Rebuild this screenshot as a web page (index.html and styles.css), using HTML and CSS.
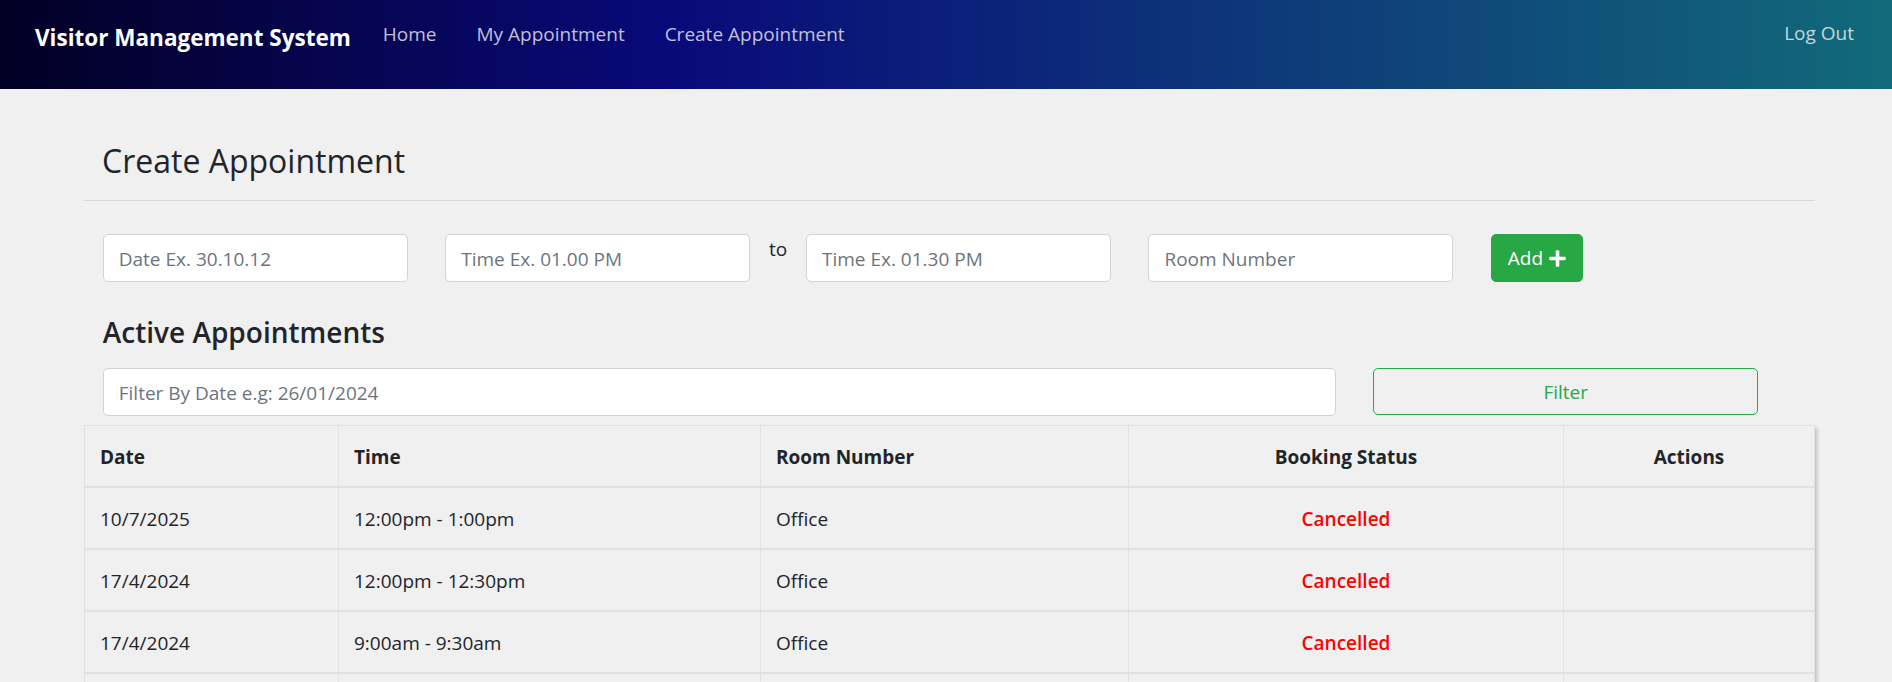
FILE: index.html
```html
<!DOCTYPE html>
<html lang="en">
<head>
<meta charset="utf-8">
<title>Visitor Management System</title>
<link rel="stylesheet" href="styles.css">
</head>
<body>
<nav class="navbar">
  <a class="brand" href="#">Visitor Management System</a>
  <ul class="nav-links">
    <li><a class="nav-link" href="#">Home</a></li>
    <li><a class="nav-link" href="#">My Appointment</a></li>
    <li><a class="nav-link" href="#">Create Appointment</a></li>
  </ul>
  <a class="nav-link logout" href="#">Log Out</a>
</nav>

<main class="page">
  <h3 class="page-title">Create Appointment</h3>
  <hr class="divider">

  <form class="create-row">
    <div class="field-col"><input class="input" type="text" placeholder="Date Ex. 30.10.12"></div>
    <div class="field-col"><input class="input" type="text" placeholder="Time Ex. 01.00 PM"></div>
    <span class="to-label">to</span>
    <div class="field-col"><input class="input" type="text" placeholder="Time Ex. 01.30 PM"></div>
    <div class="field-col"><input class="input" type="text" placeholder="Room Number"></div>
    <div class="btn-col">
      <button class="btn-add" type="button">Add
        <svg class="plus-icon" viewBox="0 0 448 512" aria-hidden="true"><path fill="#fff" d="M416 208H272V64c0-17.670-14.330-32-32-32h-32c-17.670 0-32 14.330-32 32v144H32c-17.670 0-32 14.330-32 32v32c0 17.670 14.330 32 32 32h144v144c0 17.670 14.330 32 32 32h32c17.670 0 32-14.330 32-32V304h144c17.670 0 32-14.330 32-32v-32c0-17.670-14.330-32-32-32z"/></svg>
      </button>
    </div>
  </form>

  <h4 class="section-title">Active Appointments</h4>
  <div class="filter-row">
    <div class="filter-col"><input class="input" type="text" placeholder="Filter By Date e.g: 26/01/2024"></div>
    <div class="filter-btn-col"><button class="btn-filter" type="button">Filter</button></div>
  </div>

  <table class="appt-table">
    <thead>
      <tr>
        <th class="col-date">Date</th>
        <th class="col-time">Time</th>
        <th class="col-room">Room Number</th>
        <th class="col-status center">Booking Status</th>
        <th class="col-actions center">Actions</th>
      </tr>
    </thead>
    <tbody>
      <tr>
        <td>10/7/2025</td>
        <td>12:00pm - 1:00pm</td>
        <td>Office</td>
        <td class="center status-cancelled">Cancelled</td>
        <td></td>
      </tr>
      <tr>
        <td>17/4/2024</td>
        <td>12:00pm - 12:30pm</td>
        <td>Office</td>
        <td class="center status-cancelled">Cancelled</td>
        <td></td>
      </tr>
      <tr>
        <td>17/4/2024</td>
        <td>9:00am - 9:30am</td>
        <td>Office</td>
        <td class="center status-cancelled">Cancelled</td>
        <td></td>
      </tr>
      <tr>
        <td>16/4/2024</td>
        <td>2:00pm - 2:30pm</td>
        <td>Office</td>
        <td class="center status-cancelled">Cancelled</td>
        <td></td>
      </tr>
    </tbody>
  </table>
</main>
</body>
</html>
```

FILE: styles.css
```css
* {
  box-sizing: border-box;
}

html,
body {
  margin: 0;
  padding: 0;
}

body {
  font-family: "Open Sans", "Noto Sans", sans-serif;
  font-size: 19px;
  line-height: 30px;
  color: #212529;
  background: #f0f0f0;
  overflow: hidden;
}

/* ---------- Navbar ---------- */
.navbar {
  height: 89px;
  display: flex;
  align-items: flex-start;
  padding: 19px 38px 0 35px;
  background: linear-gradient(90deg, #020024 0%, #090979 35%, #126a7a 100%);
}

.brand {
  font-size: 22.5px;
  font-weight: 700;
  line-height: 30px;
  color: #ffffff;
  text-decoration: none;
  white-space: nowrap;
  margin-top: 4px;
  margin-right: 32px;
}

.nav-links {
  display: flex;
  gap: 40px;
  list-style: none;
  margin: 0;
  padding: 0;
}

.nav-link {
  font-size: 19px;
  line-height: 28px;
  color: rgba(255, 255, 255, 0.75);
  text-decoration: none;
  white-space: nowrap;
}

.logout {
  margin-left: auto;
}

/* ---------- Page ---------- */
.page {
  padding: 0 77px 0 84px;
}

.page-title {
  margin: 53px 0 0;
  padding-left: 18px;
  font-size: 32px;
  font-weight: 400;
  line-height: 38px;
}

.divider {
  margin: 20px 0 0;
  border: 0;
  border-top: 1px solid rgba(0, 0, 0, 0.1);
  height: 0;
}

.create-row {
  display: flex;
  align-items: flex-start;
  margin: 33px 0 0;
}

.field-col {
  flex: 0 0 342.5px;
  padding: 0 18.75px;
}

.to-label {
  flex: 0 0 18px;
  font-size: 19px;
  line-height: 30px;
}

.btn-col {
  padding-left: 18.75px;
}

.input {
  display: block;
  width: 100%;
  height: 47.5px;
  padding: 2px 15px 0;
  font-family: inherit;
  font-size: 19px;
  color: #495057;
  background: #ffffff;
  border: 1px solid #ced4da;
  border-radius: 5px;
  outline: none;
}

.input::placeholder {
  color: #6c757d;
  opacity: 1;
}

.btn-add {
  display: inline-flex;
  align-items: center;
  justify-content: center;
  gap: 6px;
  width: 92px;
  height: 47.5px;
  padding: 1px 0 0;
  font-family: inherit;
  font-size: 19px;
  color: #ffffff;
  background: #28a745;
  border: 1px solid #28a745;
  border-radius: 5px;
}

.plus-icon {
  width: 17px;
  height: 19px;
  display: block;
}

.section-title {
  margin: 33px 0 0;
  padding-left: 18.75px;
  font-size: 28px;
  font-weight: 600;
  line-height: 34px;
}

.filter-row {
  display: flex;
  margin-top: 19.5px;
}

.filter-col {
  flex: 0 0 1270.5px;
  padding: 0 18.75px;
}

.filter-btn-col {
  padding-left: 18.75px;
}

.btn-filter {
  display: block;
  width: 385px;
  height: 47px;
  padding-top: 1px;
  font-family: inherit;
  font-size: 19px;
  color: #28a745;
  background: transparent;
  border: 1px solid #28a745;
  border-radius: 5px;
}

/* ---------- Table ---------- */
.appt-table {
  margin-top: 9.5px;
  width: 1731px;
  table-layout: fixed;
  border-collapse: separate;
  border-spacing: 0;
  border-top: 1px solid #dee2e6;
  border-left: 1px solid #dee2e6;
  box-shadow: 3px 2px 4px -1px rgba(0, 0, 0, 0.22);
}

.appt-table th,
.appt-table td {
  box-sizing: border-box;
  padding: 16px 15px 14px;
  line-height: 30px;
  font-size: 19px;
  text-align: left;
  vertical-align: middle;
  border-right: 1px solid #e1e3e7;
  border-bottom: 2px solid #dde0e4;
}

.appt-table th {
  font-weight: 700;
}

.col-date { width: 254px; }
.col-time { width: 422px; }
.col-room { width: 368px; }
.col-status { width: 435px; }
.col-actions { width: 251px; }

.appt-table .center {
  text-align: center;
}

.status-cancelled {
  color: #ff0000;
  font-weight: 600;
}
```
